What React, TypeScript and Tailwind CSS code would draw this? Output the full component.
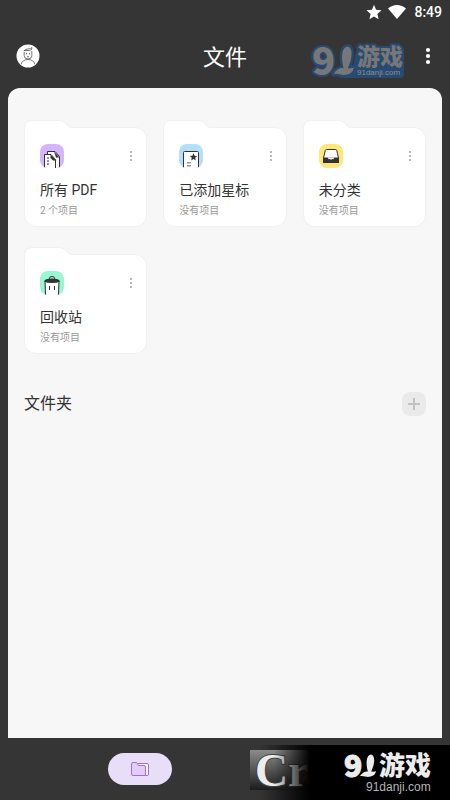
import type { ReactNode } from "react";

const PdfIcon = () => (
  <svg viewBox="0 0 24 24" className="size-6" fill="none" aria-hidden="true">
    <path d="M7.5 24V7.5H15L19.5 12.5V24Z" fill="#fff" />
    <path d="M7.5 10V7.5H15L19.5 12.5V24" stroke="#333" />
    <path d="M14 7.5L19.5 13.5H16Z" fill="#333" />
    <path d="M4.5 24V10.5H11L15.5 15.5V24Z" fill="#fff" />
    <path d="M4.5 24V10.5H11L15.5 15.5V24" stroke="#333" />
    <path d="M10.5 10.5L16 16.5H13L10.5 14Z" fill="#333" />
    <path d="M7 13h2v2H7zM7 16h2v2H7zM7 19h2v2H7z" fill="#999" />
  </svg>
);

const StarredIcon = () => (
  <svg viewBox="0 0 24 24" className="size-6" fill="none" aria-hidden="true">
    <path d="M4.5 24V8.5Q4.5 7.5 5.5 7.5H18.5Q19.5 7.5 19.5 8.5V24" fill="#fff" stroke="#333" />
    <path
      d="M14.5 9.3L15.6 11.8L18.2 12L16.2 13.8L16.8 16.5L14.5 15.1L12.2 16.5L12.8 13.8L10.8 12L13.4 11.8Z"
      fill="#333"
    />
    <path d="M8 18h4v1.5H8zM8 21h4v1.5H8z" fill="#999" />
  </svg>
);

const InboxIcon = () => (
  <svg viewBox="0 0 24 24" className="size-6" fill="none" aria-hidden="true">
    <path d="M4.5 14L6.3 6.3Q6.6 5.5 7.5 5.5H16.5Q17.4 5.5 17.7 6.3L19.5 14V16H4.5Z" fill="#fff" stroke="#333" />
    <path d="M4 13.5H20V19H4Z" fill="#333" />
    <path d="M8.5 13.5L10 15.5L11 14.6L12 16.3L13 14.6L14 15.5L15.5 13.5Z" fill="#fff" />
  </svg>
);

const TrashIcon = () => (
  <svg viewBox="0 0 24 24" className="size-6" fill="none" aria-hidden="true">
    <path d="M5.5 10L6 24H18L18.5 10Z" fill="#fff" />
    <path d="M5 10L5.5 24M19 10L18.5 24" stroke="#333" />
    <path d="M9.5 8V7.2Q9.5 5.5 12 5.5T14.5 7.2V8" stroke="#333" />
    <path d="M4 10.5Q4.5 7.5 12 7.5T20 10.5Q17 12 12 12T4 10.5Z" fill="#333" />
    <path d="M9.5 15v4M14.5 15v4" stroke="#333" />
  </svg>
);

type Item = {
  name: string;
  note: string;
  tint: string;
  icon: ReactNode;
};

const items: Item[] = [
  { name: "所有 PDF", note: "2 个项目", tint: "bg-[#d4b5fb]", icon: <PdfIcon /> },
  { name: "已添加星标", note: "没有项目", tint: "bg-[#b3dff8]", icon: <StarredIcon /> },
  { name: "未分类", note: "没有项目", tint: "bg-[#fde778]", icon: <InboxIcon /> },
  { name: "回收站", note: "没有项目", tint: "bg-[#98f7d0]", icon: <TrashIcon /> },
];

const FolderCard = ({ name, note, tint, icon }: Item) => (
  <li className="flex flex-col">
    {/* tab of the folder, overlaps the body by its border */}
    <svg viewBox="0 0 48 8" className="relative -mb-px block h-2 w-12" fill="none" aria-hidden="true">
      <path d="M1 8Q1 1 8 1H36Q39 1 41 3L44 6Q45 7.5 48 8Z" fill="#fff" />
      <path d="M0.5 8Q0.5 0.5 8 0.5H36Q39 0.5 41 2.5L44 5.5Q45.5 7.5 48 7.5" stroke="#f1f1f1" />
    </svg>
    <div className="rounded-xl rounded-tl-none border border-[#f1f1f1] bg-white px-[15px] pt-4 pb-[7px]">
      <div className="flex items-center justify-between">
        <span className={`size-6 overflow-hidden rounded-lg ${tint}`}>{icon}</span>
        <button
          type="button"
          aria-label={`${name} 更多`}
          className="-mr-1 flex h-6 w-2 items-center justify-center"
        >
          <svg viewBox="0 0 2 10" className="h-2.5 w-0.5" fill="#b8b8b8" aria-hidden="true">
            <path d="M0 0h2v2H0zM0 4h2v2H0zM0 8h2v2H0z" />
          </svg>
        </button>
      </div>
      <h2 className="mt-3 text-sm leading-5 whitespace-nowrap text-[#333]">{name}</h2>
      <p className="mt-[3px] text-[10px] leading-4 text-[#999]">{note}</p>
    </div>
  </li>
);

const SwordMark = () => (
  <path d="M26.5 0.5C21.500 1 20.500 9 23 18.500C20 18 17 19.500 14.500 23.500C18 22.500 21 24.500 24.500 24C29 23.500 31 21.500 31.500 18C30 19 28.500 18.500 26.500 18.500C30.500 10 31 2 26.500 0.500Z" />
);

const HeaderLogo = () => (
  <svg
    viewBox="0 0 96 44"
    className="h-11 w-24 shrink-0 overflow-visible font-['Noto_Sans_CJK_SC',sans-serif]"
    role="img"
    aria-label="91游戏"
    fill="#777"
    stroke="#294a70"
    strokeLinejoin="round"
    strokeWidth="4"
    paintOrder="stroke"
  >
    {/* blue backing */}
    <path d="M48 12H90Q94 12 94 16V40Q94 44 90 44H30V38Q44 36 44 28Z" fill="#294a70" stroke="none" />
    <text x="2" y="41" fontSize="38" fontWeight="900">9</text>
    <g transform="translate(6 12) scale(1.2)">
      <SwordMark />
    </g>
    <text x="47" y="31" fontSize="23" fontWeight="900">游戏</text>
    <text x="47" y="41" fontSize="8" stroke="none" fill="#8a8f96" className="font-['Liberation_Sans',sans-serif]">
      91danji.com
    </text>
  </svg>
);

const Banner = () => (
  <div className="absolute right-0 bottom-0 h-[55px] w-[200px] bg-linear-to-r from-transparent from-5% to-black to-30%">
    <svg
      viewBox="0 0 200 55"
      className="h-full w-full font-['Noto_Sans_CJK_SC',sans-serif]"
      role="img"
      aria-label="91游戏"
      fill="#ececec"
    >
      <defs>
        <linearGradient id="plate" x1="0" y1="0" x2="0" y2="1">
          <stop offset="0" stopColor="#8c8c8c" />
          <stop offset="1" stopColor="#1c1c1c" />
        </linearGradient>
        <linearGradient id="fade">
          <stop offset="0.4" stopColor="#000" stopOpacity="0" />
          <stop offset="1" stopColor="#000" />
        </linearGradient>
      </defs>
      <rect y="5" width="60" height="40" fill="url(#plate)" />
      <text
        x="5"
        y="41"
        fontSize="46"
        fontWeight="700"
        stroke="#444"
        strokeWidth="2"
        paintOrder="stroke"
        className="font-['Liberation_Serif',serif]"
      >
        Cr
      </text>
      <path d="M51 38L60 20V38H56V33Z" fill="#a5472b" />
      <rect y="5" width="60" height="40" fill="url(#fade)" />
      <text x="94" y="32" fontSize="30" fontWeight="900" stroke="#ececec">9</text>
      <g transform="translate(96 9) scale(0.95)">
        <SwordMark />
      </g>
      <text x="129" y="30" fontSize="26" fontWeight="900">游戏</text>
      <text x="116" y="46" fontSize="12" fill="#b5b5b5" className="font-['Liberation_Sans',sans-serif]">
        91danji.com
      </text>
    </svg>
  </div>
);

const App = () => {
  return (
    <div className="flex min-h-screen flex-col bg-[#353535] font-['Roboto','Noto_Sans_CJK_SC',sans-serif]">
      {/* status bar */}
      <div className="flex h-6 items-center justify-end gap-1.5 pr-2 text-sm font-medium text-white">
        <svg viewBox="0 0 16 16" className="size-4" fill="currentColor" aria-hidden="true">
          <path d="M8 .8l2.1 5 5.4.5-4.1 3.6 1.2 5.3L8 12.4l-4.6 2.8 1.2-5.3L.5 6.3l5.4-.5z" />
        </svg>
        <svg viewBox="0 0 18 14" className="h-3.5 w-[18px]" fill="currentColor" aria-hidden="true">
          <path d="M9 14L0 3.500Q4 0 9 0T18 3.500Z" />
        </svg>
        <span className="ml-0.5">8:49</span>
      </div>

      <header className="grid h-16 grid-cols-3 items-center px-4">
        <button type="button" aria-label="账户" className="size-6">
          <svg viewBox="0 0 24 24" className="size-6" fill="none" stroke="#555" strokeWidth="0.8" aria-hidden="true">
            <circle cx="12" cy="12" r="11.5" fill="#fff" stroke="none" />
            <path d="M8.2 8V11.5Q8.2 15 12 15T15.8 11.5V7" />
            <path d="M8 7Q9 5 12 5Q15 5 16 3.5Q16.3 6.5 13.5 6.5H8Z" fill="#fff" />
            <path d="M10.5 8.8v1.7M13.5 8.8v1.7M11 12.7h2" />
            <path d="M5 20.5Q6.5 15.5 12 15.5T19 20.5" />
          </svg>
        </button>
        <h1 className="pt-1 text-center text-[22px] leading-8 text-white">文件</h1>
        <div className="flex items-center justify-end gap-4">
          <HeaderLogo />
          <button type="button" aria-label="更多" className="flex h-8 w-3 items-center justify-center">
            <svg viewBox="0 0 4 16" className="h-4 w-1 overflow-visible" fill="#fff" aria-hidden="true">
              <circle cx="2" cy="2" r="2.1" />
              <circle cx="2" cy="8" r="2.1" />
              <circle cx="2" cy="14" r="2.1" />
            </svg>
          </button>
        </div>
      </header>

      <main className="mx-2 flex-1 rounded-t-xl bg-[#f7f7f7] px-4 pt-8">
        <ul className="grid grid-cols-3 gap-x-4 gap-y-5">
          {items.map((item) => (
            <FolderCard key={item.name} {...item} />
          ))}
        </ul>

        <div className="mt-[38px] flex items-center justify-between">
          <h2 className="text-base leading-6 text-[#333]">文件夹</h2>
          <button
            type="button"
            aria-label="新建文件夹"
            className="flex size-6 items-center justify-center rounded-lg bg-[#eaeaea]"
          >
            <svg viewBox="0 0 12 12" className="size-3" fill="#c2c2c2" aria-hidden="true">
              <path d="M5 0h2v5h5v2H7v5H5V7H0V5h5z" />
            </svg>
          </button>
        </div>
      </main>

      <nav className="relative flex h-[62px] items-center pl-[24%]">
        <button
          type="button"
          aria-label="文件"
          className="flex h-8 w-16 items-center justify-center rounded-full bg-[#e8def8]"
        >
          <svg viewBox="0 0 20 16" className="h-4 w-5" fill="none" stroke="#a76bd8" aria-hidden="true">
            <path d="M8 2.5H17Q18.5 2.5 18.5 4V13Q18.5 14.5 17 14.5H3" fill="#fff" />
            <path
              d="M1.5 3Q1.5 1.5 3 1.5H6.5L8.5 4.5H14Q15.5 4.5 15.5 6V14.5H3Q1.5 14.5 1.5 13Z"
              fill="#e3cbfa"
            />
          </svg>
        </button>
        <Banner />
      </nav>
    </div>
  );
};

export default App;
